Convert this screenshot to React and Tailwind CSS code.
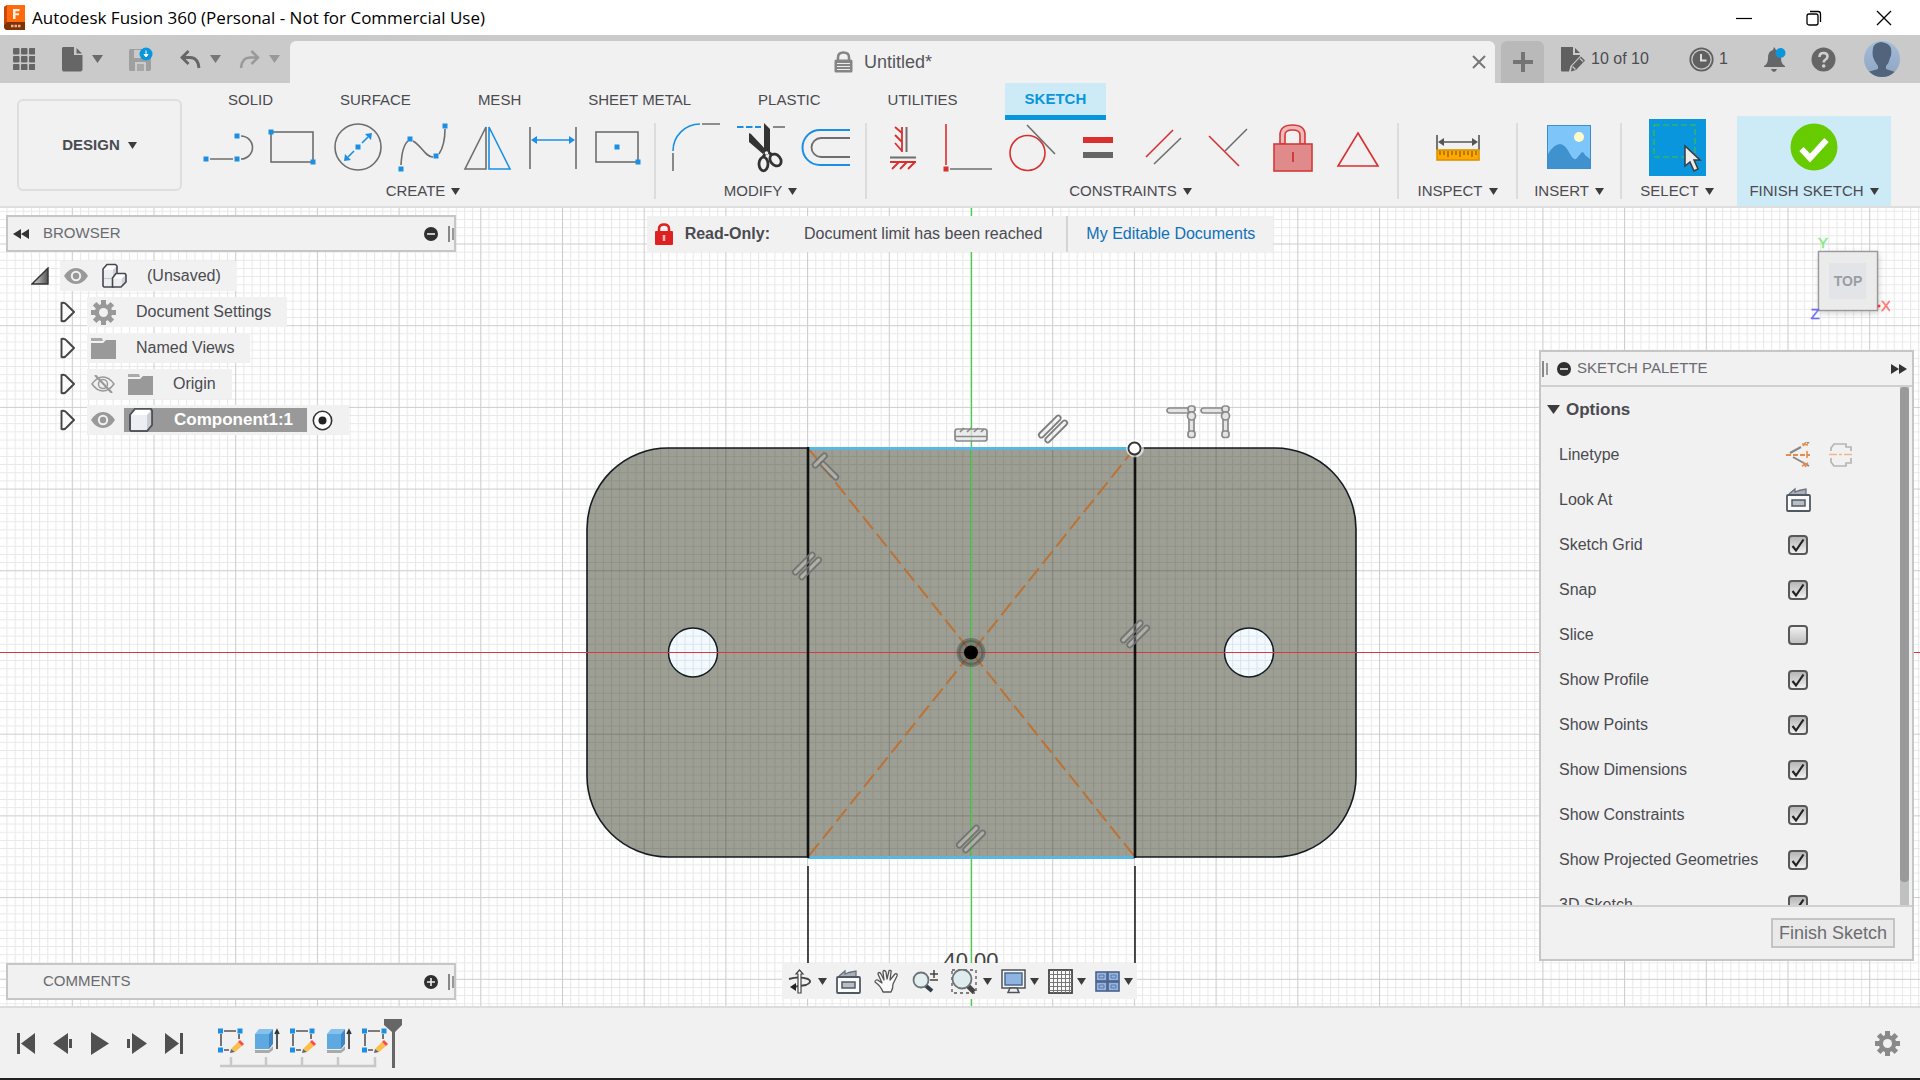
import React from "react";

const BLUE = "#1a8fe6";
const GREY = "#6e6e6e";
const RED = "#d92f2f";

function Caret({ className = "text-[#3c3c3c]", w = 9, h = 7 }) {
  return (
    <svg width={w} height={h} viewBox="0 0 9 7" preserveAspectRatio="none" className={className} aria-hidden="true">
      <path d="M0 0H9L4.500 7Z" fill="currentColor" />
    </svg>
  );
}

function Dot({ x, y, c = BLUE }) {
  return <rect x={x - 2.5} y={y - 2.5} width="5" height="5" fill={c} stroke="none" />;
}

function Tool({ label, children }) {
  return (
    <button type="button" aria-label={label} className="h-[52px] w-12 shrink-0">
      <svg width="48" height="52" viewBox="0 0 48 52" fill="none" strokeWidth="1.6" stroke={GREY} className="block overflow-visible">
        {children}
      </svg>
    </button>
  );
}

function Group({ label, className, children }) {
  return (
    <div className={`flex shrink-0 flex-col items-center pt-[5px] ${className}`}>
      <div className="flex h-[52px] items-center gap-[17px]">{children}</div>
      <button type="button" className="mt-2 flex h-5 items-center gap-[6px] whitespace-nowrap text-[15px] leading-5 text-[#4a4a50]">
        {label}
        <Caret />
      </button>
    </div>
  );
}

function Sep() {
  return <div className="mt-[7px] h-[76px] w-[2px] shrink-0 bg-[#dcdcdc]" />;
}

/* ---------- title bar ---------- */

function TitleBar() {
  return (
    <header className="flex h-[35px] shrink-0 items-center justify-between bg-white pl-1 pr-7">
      <div className="flex items-center gap-[6px]">
        <svg width="22" height="26" viewBox="0 0 22 26" aria-hidden="true">
          <path d="M0 2 3 0H21V25H2L0 22Z" fill="#ff6a0c" />
          <path d="M0 2 3 0V18L0 20Z" fill="#c9480a" />
          <path d="M0 20 3 17H21V25H2L0 23Z" fill="#7e3205" />
          <path d="M9 14V4H15.500V6.200H11.500V8.200H15V10.200H11.500V14Z" fill="#fff1e4" />
          <path d="M7 21H17" stroke="#e5b593" strokeWidth="2.500" strokeDasharray="2.500 1" />
        </svg>
        <h1 className="whitespace-nowrap font-['Open_Sans',sans-serif] text-[17px] leading-6 text-black">
          Autodesk Fusion 360 (Personal - Not for Commercial Use)
        </h1>
      </div>
      <div className="flex items-center gap-[54px]">
        <button type="button" aria-label="Minimize">
          <svg width="16" height="16" viewBox="0 0 16 16"><path d="M0 8.500H16" stroke="#000" strokeWidth="1.200" /></svg>
        </button>
        <button type="button" aria-label="Restore">
          <svg width="16" height="16" viewBox="0 0 16 16" fill="none" stroke="#000" strokeWidth="1.300">
            <rect x="1" y="4" width="11" height="11" rx="2" />
            <path d="M4 1.500H12Q14.500 1.500 14.500 4V12" />
          </svg>
        </button>
        <button type="button" aria-label="Close">
          <svg width="16" height="16" viewBox="0 0 16 16"><path d="M1 1 15 15M15 1 1 15" stroke="#000" strokeWidth="1.300" /></svg>
        </button>
      </div>
    </header>
  );
}

/* ---------- document tabs ---------- */

function DocumentBar() {
  return (
    <div className="flex h-[48px] shrink-0 items-end bg-[#cacaca] text-[#666]">
      <div className="flex h-[48px] w-[290px] shrink-0 items-center pl-[13px]">
        <button type="button" aria-label="Data panel" className="w-[49px]">
          <svg width="22" height="22" viewBox="0 0 22 22" fill="#666">
            {[0, 8, 16].map((y) => [0, 8, 16].map((x) => <rect key={`${x}-${y}`} x={x} y={y} width="6.500" height="6.500" rx="1" />))}
          </svg>
        </button>
        <button type="button" aria-label="File" className="flex w-[67px] items-center gap-[9px]">
          <svg width="21" height="25" viewBox="0 0 21 25" fill="#666"><path d="M1 0H12V8H20.500V23L19 24.500H1L0 23V1Z" /><path d="M14.500 1 20 6.500H14.500Z" /></svg>
          <Caret className="text-[#6a6a6a]" w={11} h={8} />
        </button>
        <button type="button" aria-label="Save" className="w-[51px]">
          <svg width="24" height="25" viewBox="0 0 24 25">
            <path d="M1.500 2H19L22 5V22Q22 24 20 24H1.500Q0 24 0 22V3.500Q0 2 1.500 2Z" fill="#9f9f9f" />
            <path d="M5 3H15V11H5ZM6 15H17V24H15V18H12.500V24H6Z" fill="#cacaca" />
            <path d="M8 17H15V24H8Z" fill="#a8a8a8" />
            <circle cx="17" cy="7" r="6.500" fill="#0a96dc" />
            <path d="M17 3.500V8M15 7.500 17 10 19 7.500Z" stroke="#fff" fill="#fff" strokeWidth="1" />
          </svg>
        </button>
        <button type="button" aria-label="Undo" className="flex w-[59px] items-center gap-[9px]">
          <svg width="21" height="19" viewBox="0 0 21 19" fill="none" stroke="#666" strokeWidth="2.800"><path d="M8.500 1 2 7.500 8.500 14M2 7.500H10Q18 7.500 19 18" /></svg>
          <Caret className="text-[#777]" w={11} h={8} />
        </button>
        <button type="button" aria-label="Redo" className="flex items-center gap-[9px]">
          <svg width="21" height="19" viewBox="0 0 21 19" fill="none" stroke="#999" strokeWidth="2.500"><path d="M12.500 1 19 7.500 12.500 14M19 7.500H11Q3 7.500 2 18" /></svg>
          <Caret className="text-[#999]" w={11} h={8} />
        </button>
      </div>
      <div className="flex h-[42px] min-w-0 flex-1 items-center rounded-t-[6px] bg-[#f1f1f1] pl-[22px] pr-[9px]">
        <div className="flex flex-1 items-center justify-center gap-[11px] pr-[18px]">
          <svg width="19" height="22" viewBox="0 0 19 22">
            <path d="M4 10V6.500Q4 1.500 9.500 1.500T15 6.500V10" fill="none" stroke="#858585" strokeWidth="2.500" />
            <rect x="0.500" y="8.500" width="18" height="13" rx="1.500" fill="#858585" />
            <path d="M3 12.500H16M3 15.500H16M3 18.500H16" stroke="#eee" strokeWidth="1" />
          </svg>
          <span className="text-[18px] leading-6 text-[#55555c]">Untitled*</span>
        </div>
        <button type="button" aria-label="Close tab">
          <svg width="14" height="14" viewBox="0 0 14 14"><path d="M1 1 13 13M13 1 1 13" stroke="#777" strokeWidth="2" /></svg>
        </button>
      </div>
      <button type="button" aria-label="New tab" className="ml-[6px] flex h-[42px] w-[43px] shrink-0 items-center justify-center rounded-t-[6px] bg-[#b9b9b9]">
        <svg width="20" height="20" viewBox="0 0 20 20"><path d="M10 0V20M0 10H20" stroke="#747474" strokeWidth="4" /></svg>
      </button>
      <div className="flex h-[48px] w-[376px] shrink-0 items-center pl-[17px] text-[16px] leading-5 text-[#4c4c52]">
        <button type="button" className="flex w-[128px] items-center gap-[5px]">
          <svg width="25" height="25" viewBox="0 0 25 25" fill="#606060">
            <path d="M0 0H12V8H19V9L9.500 19 8 24.500H1Q0 24.500 0 23.500Z" /><path d="M14 1 19 6H14Z" />
            <path d="M11 19 20 9.500 24 13.500 15 23 10 24.500Z" /><path d="M19 11.500 22 14.500M11.500 19.500 14.500 22.500" stroke="#cacaca" strokeWidth="1.200" />
          </svg>
          10 of 10
        </button>
        <button type="button" className="flex w-[75px] items-center gap-[5px]">
          <svg width="25" height="25" viewBox="0 0 25 25"><circle cx="12.500" cy="12.500" r="11.200" fill="none" stroke="#606060" strokeWidth="1.800" /><circle cx="12.500" cy="12.500" r="9" fill="#606060" /><path d="M12 7V13.500H17.500" fill="none" stroke="#ddd" strokeWidth="2" /></svg>
          1
        </button>
        <button type="button" aria-label="Notifications" className="w-[47px]">
          <svg width="22" height="25" viewBox="0 0 22 25" fill="#666">
            <path d="M10 0Q11 1 12 3Q17 4 17 11Q17 17 21 19V20H0V19Q4 17 4 11Q4 4 9 3Z" /><path d="M7 22H13Q12 25 10 25T7 22Z" />
            <circle cx="16.500" cy="6" r="5" fill="#0a96dc" />
          </svg>
        </button>
        <button type="button" aria-label="Help" className="w-[53px]">
          <svg width="25" height="25" viewBox="0 0 25 25"><circle cx="12.500" cy="12.500" r="12" fill="#666" /><path d="M8.500 10Q8.500 6 12.500 6T16.500 9.500Q16.500 11.500 14 13Q12.700 14 12.700 15.500" fill="none" stroke="#d0d0d0" strokeWidth="2.600" /><circle cx="12.700" cy="19" r="1.800" fill="#d0d0d0" /></svg>
        </button>
        <button type="button" aria-label="Account">
          <svg width="36" height="36" viewBox="0 0 36 36">
            <defs><clipPath id="av"><circle cx="18" cy="18" r="18" /></clipPath><linearGradient id="avg" x2="0" y2="1"><stop stopColor="#a3bdd9" /><stop offset="1" stopColor="#8fa5c2" /></linearGradient></defs>
            <g clipPath="url(#av)"><rect width="36" height="36" fill="url(#avg)" /><path d="M9 7Q10 2 17 1Q25 2 27 7Q28 14 26 17Q25 22 22 25V28L31 31V36H4V31L14 28V25Q10 20 9 16Q8 12 9 7Z" fill="#52637c" /></g>
          </svg>
        </button>
      </div>
    </div>
  );
}

/* ---------- ribbon ---------- */

const TABS = ["SOLID", "SURFACE", "MESH", "SHEET METAL", "PLASTIC", "UTILITIES"];

function Ribbon() {
  return (
    <div className="flex h-[125px] shrink-0 border-b-2 border-[#dedede] bg-[#f1f1f1] shadow-[0_1px_1px_#eee]">
      <div className="w-[204px] shrink-0 pl-[17px] pt-4">
        <button type="button" className="flex h-[92px] w-[165px] items-center justify-center gap-2 rounded-[6px] border-2 border-[#dedede] text-[15px] font-bold text-[#4a4a50]">
          DESIGN <Caret />
        </button>
      </div>
      <div className="min-w-0 flex-1">
        <div className="flex h-[33px] items-start gap-[27px] pl-1">
          {TABS.map((t) => (
            <button key={t} type="button" className="h-[34px] whitespace-nowrap px-5 text-[15px] leading-5 text-[#4a4a50]">{t}</button>
          ))}
          <button type="button" className="h-[37px] border-b-[5px] border-[#0a96dc] bg-[#cdeaf7] px-5 text-[15px] font-bold leading-5 text-[#0a96dc]">SKETCH</button>
        </div>
        <div className="flex h-[90px] items-start">
          <Group label="CREATE" className="w-[450px] pr-3">
            <Tool label="Line"><path d="M6 38H29M37 15A11.500 11.500 0 0 1 37 38" /><Dot x={2} y={38} /><Dot x={33} y={38} /><Dot x={33} y={15} /></Tool>
            <Tool label="Rectangle"><rect x="2" y="11" width="42" height="30" /><Dot x={2} y={11} /><Dot x={44} y={41} /></Tool>
            <Tool label="Circle"><circle cx="24" cy="26" r="23" /><g stroke={BLUE} fill={BLUE}><path d="M28 22 34 16M20 30 14 36" /><path d="M38 12 37 19 31 13ZM10 40 11 33 17 39Z" stroke="none" /></g><Dot x={24} y={26} /></Tool>
            <Tool label="Spline"><path d="M2 44Q3 25 9 20M14 20C24 26 26 36 34 36M40 33Q46 24 46 8" /><Dot x={2} y={48} /><Dot x={11} y={18} /><Dot x={37} y={35} /><Dot x={46} y={5} /></Tool>
            <Tool label="Mirror"><path d="M22 6V48H1Z" /><path d="M25 6V48H46Z" stroke={BLUE} /></Tool>
            <Tool label="Dimension"><path d="M1 6V48M47 6V48" /><path d="M5 19H43" stroke={BLUE} /><path d="M2 19 8 15V23ZM46 19 40 15V23Z" fill={BLUE} stroke="none" /></Tool>
            <Tool label="Center rectangle"><rect x="2" y="11" width="42" height="30" /><Dot x={23} y={26} /><Dot x={44} y={41} /></Tool>
          </Group>
          <Sep />
          <Group label="MODIFY" className="w-[209px]">
            <Tool label="Fillet"><path d="M1 30A27 27 0 0 1 28 3" stroke={BLUE} /><path d="M30 3H48M1 32V50" /></Tool>
            <Tool label="Trim">
              <path d="M0 6H24" stroke={BLUE} strokeWidth="1.800" strokeDasharray="6.500 2.500" /><path d="M36 6H48" />
              <path d="M27 2 30 5 33 8V31L30 34 27 32ZM12 12 14 13 29 29 26 33 12 21Z" fill="#333" stroke="none" />
              <ellipse cx="26.500" cy="43" rx="4.500" ry="6.800" stroke="#333" strokeWidth="2.800" /><ellipse cx="38.500" cy="39" rx="5" ry="6.500" stroke="#333" strokeWidth="2.800" transform="rotate(-40 38.500 39)" />
              <path d="M26 36 30 30 35 34" stroke="#333" strokeWidth="3" /><circle cx="29.500" cy="32" r="1.800" fill="#eee" stroke="none" />
            </Tool>
            <Tool label="Offset"><path d="M48 9H18A17.500 17.500 0 0 0 18 44H48" stroke={BLUE} strokeWidth="2" /><path d="M48 17H19A9.500 9.500 0 0 0 19 36H48" strokeWidth="1.800" /></Tool>
          </Group>
          <Sep />
          <Group label="CONSTRAINTS" className="w-[530px] pr-[3px]">
            <Tool label="Horizontal/Vertical"><g stroke={RED}><path d="M23 6V31M23 12 16 6M23 21 16 14M23 30 16 22M11 41H37M20 41 13 48M28 41 21 48M36 41 29 48" strokeWidth="1.800" /></g><path d="M27.500 6V31M11 36.500H37" strokeWidth="2" /></Tool>
            <Tool label="Coincident"><path d="M2 3V44" stroke={RED} /><path d="M6 48H48" /><Dot x={2} y={48} c={RED} /></Tool>
            <Tool label="Tangent"><circle cx="18.500" cy="32" r="17.500" stroke={RED} /><path d="M18 4 46 33" /></Tool>
            <Tool label="Equal"><path d="M9 16H39V22H9Z" fill={RED} stroke="none" /><path d="M9 31H39V37H9Z" fill="#666" stroke="none" /></Tool>
            <Tool label="Parallel"><path d="M7 36 34 9" stroke={RED} /><path d="M15 43 42 17" /></Tool>
            <Tool label="Perpendicular"><path d="M5 15 35 45" stroke={RED} /><path d="M21 30 43 8" /></Tool>
            <Tool label="Fix"><g stroke="#d43a3a"><path d="M11 23V14Q11 4 23.500 4T36 14V23H31V14Q31 9 23.500 9T16 14V23Z" fill="#efb9b9" /><rect x="5" y="23" width="38" height="27" fill="#e08b8b" /><path d="M24 31V41" strokeWidth="2" /></g></Tool>
            <Tool label="Polygon"><path d="M24 12 44 45H4Z" stroke={RED} /></Tool>
          </Group>
          <Sep />
          <Group label="INSPECT" className="w-[117px]">
            <Tool label="Measure">
              <path d="M3 14V29M45 14V29M6 21H42" stroke="#555" /><path d="M4 21 10 17V25ZM44 21 38 17V25Z" fill="#555" stroke="none" />
              <rect x="3" y="29" width="42" height="10" fill="#ffa800" stroke="#dd9200" /><path d="M6 30V34M10 30V34M14 30V36M18 30V34M22 30V34M26 30V36M30 30V34M34 30V34M38 30V36M42 30V34" stroke="#704b00" strokeWidth="1" />
            </Tool>
          </Group>
          <Sep />
          <Group label="INSERT" className="w-[102px]">
            <Tool label="Insert image">
              <rect x="2.500" y="4.500" width="43" height="43" fill="#7ec6fa" stroke="#3b8fd0" strokeWidth="1" />
              <path d="M3 33Q9 23 15 23Q20 23 25 33 28 39 31 38L37 31Q39 31 40 34L45 38V47H3Z" fill="#3f92ce" stroke="none" /><circle cx="34" cy="16" r="5" fill="#fffcc8" stroke="none" />
            </Tool>
          </Group>
          <Sep />
          <Group label="SELECT" className="w-[115px] pr-[5px]">
            <button type="button" aria-label="Select" aria-pressed="true" className="h-[57px] w-[57px] bg-[#0a96dc]">
              <svg width="57" height="57" viewBox="0 0 57 57"><rect x="5" y="6" width="41" height="32" fill="none" stroke="#33b46a" strokeWidth="1.600" strokeDasharray="6 3" /><path d="M36 27V47L41 43 45 52 49 50 45 41H51Z" fill="#eee" stroke="#3b3b3b" strokeWidth="1.500" /></svg>
            </button>
          </Group>
          <div className="h-[90px] bg-[#cdeaf7]">
            <Group label="FINISH SKETCH" className="w-[154px]">
              <Tool label="Finish sketch"><circle cx="24" cy="26" r="23.500" fill="#66cc00" stroke="none" /><path d="M11.500 28 20 37 36.500 19" stroke="#fff" strokeWidth="6" /></Tool>
            </Group>
          </div>
        </div>
      </div>
    </div>
  );
}

/* ---------- canvas drawing ---------- */

const CX = 971;
const CY = 652.5;
const STEP = 81.7;

function ParallelGlyph({ x, y }) {
  return (
    <g transform={`translate(${x} ${y}) rotate(-45)`} fill="#ddd" fillOpacity="0.3" stroke="#6f6f6f" strokeOpacity=".9" strokeWidth="1.800">
      <rect x="-15" y="-6.500" width="29" height="5" rx="2.500" /><rect x="-14" y="1.500" width="29" height="5" rx="2.500" />
    </g>
  );
}

function PerpGlyph({ x, y }) {
  return (
    <g transform={`translate(${x} ${y})`} fill="#e4e4e4" stroke="#8a8a8a" strokeWidth="1.700">
      <rect x="0" y="3" width="23" height="5" rx="2.500" /><rect x="21" y="1" width="7" height="6" rx="2.500" /><rect x="22" y="11" width="5" height="16" /><circle cx="24.500" cy="11" r="4" /><rect x="21" y="26" width="7" height="6.500" rx="2.500" />
    </g>
  );
}

function Sketch() {
  return (
    <svg className="absolute inset-0 h-full w-full" viewBox="0 208 1920 798" preserveAspectRatio="xMidYMid slice" fill="none" aria-label="Sketch canvas">
      <defs>
        <pattern id="minor" x={CX - 0.5} y={CY - 0.5} width={STEP / 10} height={STEP / 10} patternUnits="userSpaceOnUse"><path d="M.5 0V9M0 .5H9" stroke="#000" strokeOpacity=".09" /></pattern>
        <pattern id="major" x={CX - 0.5} y={CY - 0.5} width={STEP} height={STEP} patternUnits="userSpaceOnUse"><path d="M.5 0V82M0 .5H82" stroke="#000" strokeOpacity=".12" /></pattern>
      </defs>
      <rect y="208" width="1920" height="798" fill="#fff" />
      <path d="M669 448H1275A81 81 0 0 1 1356 529V776A81 81 0 0 1 1275 857H668A81 81 0 0 1 587 776V529A81 81 0 0 1 669 448Z" fill="#9e9f94" stroke="#141d22" strokeWidth="1.600" />
      <circle cx="693" cy="652.500" r="24.500" fill="#f2faff" stroke="#141d22" strokeWidth="1.500" />
      <circle cx="1249" cy="652.500" r="24.500" fill="#f2faff" stroke="#141d22" strokeWidth="1.500" />
      <rect y="208" width="1920" height="798" fill="url(#minor)" />
      <rect y="208" width="1920" height="798" fill="url(#major)" />
      <path d="M0 652.500H1920" stroke="#d23c41" strokeWidth="1.200" />
      <path d="M971.500 208V1006" stroke="#46d246" strokeWidth="1.300" />
      <path d="M808 448 1135 857M1135 448 808 857" stroke="#bd7234" strokeWidth="2" strokeDasharray="16 6" />
      <path d="M808 448.500H1135M808 857.500H1135" stroke="#5bb6e2" strokeWidth="3" />
      <path d="M808 447V858M1135 447V858" stroke="#111" strokeWidth="2.600" />
      <path d="M808 866V975M1135 866V975" stroke="#222" strokeWidth="1.600" />
      <circle cx="971" cy="652.500" r="12.500" stroke="#3a3d36" strokeOpacity=".4" strokeWidth="4" fill="#4a4d45" fillOpacity=".35" />
      <circle cx="971" cy="652.500" r="7" fill="#000" />
      <circle cx="1135" cy="448.500" r="9" fill="#fff" fillOpacity=".6" />
      <circle cx="1134.500" cy="448.500" r="6" fill="#fff" stroke="#333" strokeWidth="1.800" />
      <ParallelGlyph x={807} y={566} /><ParallelGlyph x={1135} y={634} /><ParallelGlyph x={971} y={839} /><ParallelGlyph x={1053} y={429} />
      <g transform="translate(823 465) rotate(45)" fill="#ddd" fillOpacity=".3" stroke="#6f6f6f" strokeOpacity=".9" strokeWidth="1.800"><rect x="-8" y="-10" width="5" height="18" rx="2.500" /><rect x="-3" y="-3" width="23" height="5" rx="2.500" /></g>
      <g stroke="#8a8a8a" strokeWidth="1.700" fill="#e4e4e4" fillOpacity=".7">
        <rect x="955" y="429" width="32" height="12" rx="2.500" />
        <path d="M955 436.500H987M960 432 964 428M967 432 971 428M974 432 978 428M981 432 984 429" />
      </g>
      <PerpGlyph x={1167} y={405} /><PerpGlyph x={1201} y={405} />
      <text x="971" y="968" textAnchor="middle" fontSize="22" fontFamily="Liberation Sans, Arial, sans-serif" fill="#444">40.00</text>
    </svg>
  );
}

/* ---------- browser tree ---------- */

function Eye({ off }) {
  return (
    <svg width="24" height="18" viewBox="0 0 24 18" fill="none">
      {off ? (
        <g stroke="#999" strokeWidth="1.500"><path d="M1 9Q6 2 12 2T23 9Q18 16 12 16T1 9Z" /><circle cx="12" cy="9" r="4.500" /><path d="M4 0 21 18" strokeWidth="2.200" /></g>
      ) : (
        <g><path d="M0 9Q5 1 12 1T24 9Q19 17 12 17T0 9Z" fill="#999" /><circle cx="12" cy="9" r="4.200" fill="#999" stroke="#f1f1f1" strokeWidth="2" /></g>
      )}
    </svg>
  );
}

function Folder() {
  return <svg width="25" height="21" viewBox="0 0 25 21" fill="#999"><path d="M0 5H12L15 2H25V21H0Z" /><path d="M0 0H11L12 3H0Z" fill="#aaa" /></svg>;
}

function Gear({ size = 25, c = "#999" }) {
  return (
    <svg width={size} height={size} viewBox="0 0 25 25" fill={c}>
      {[0, 45, 90, 135].map((a) => <rect key={a} x="10" y="0" width="5" height="25" transform={`rotate(${a} 12.500 12.500)`} />)}
      <circle cx="12.500" cy="12.500" r="8.800" /><circle cx="12.500" cy="12.500" r="4.500" fill="#f1f1f1" />
    </svg>
  );
}

function Cube() {
  return <svg width="26" height="26" viewBox="0 0 26 26" stroke="#4e5258" strokeWidth="1.700" strokeLinejoin="round"><path d="M2 8 7 2H23L24 4V18L19 24H3L2 23Z" fill="#eceef2" /><path d="M2 8 7 2H23L19 8Z" fill="#fff" stroke="none" /><path d="M19 8 24 3V18L19 24Z" fill="#c9ccd3" stroke="none" /><path d="M2 8 7 2H23L24 4V18L19 24H3L2 23Z" fill="none" /></svg>;
}

function Cubes() {
  return (
    <svg width="26" height="26" viewBox="0 0 26 26" strokeLinejoin="round">
      <path d="M2 6 6 1.500H14.500L16 3V11L12 15V24H3L2 23Z" fill="#eceef2" />
      <path d="M2 6 6 1.500H14.500L16 3 12 7H2Z" fill="#fff" /><path d="M12 7 16 3V11L12 15Z" fill="#cdd0d6" /><path d="M2 15.500H11" stroke="#c6c9d0" strokeWidth="1.200" />
      <path d="M2 6 6 1.500H14.500L16 3V11L12 15V24H3L2 23Z" fill="none" stroke="#44484e" strokeWidth="1.600" />
      <path d="M11.500 15 15 10.500H24L25 12V19L20 24H11.500Z" fill="#eceef2" />
      <path d="M11.500 15 15 10.500H24L25 12 21 15.500H12Z" fill="#fff" /><path d="M21 15.500 25 11.500V19L20.500 24Z" fill="#cdd0d6" />
      <path d="M11.500 15 15 10.500H24L25 12V19L20 24H11.500Z" fill="none" stroke="#44484e" strokeWidth="1.600" />
    </svg>
  );
}

function Expander() {
  return (
    <button type="button" aria-label="Expand" className="w-[27px] shrink-0">
      <svg width="16" height="22" viewBox="0 0 16 22"><path d="M1.500 2Q5 1 7 4L14 11 7 18Q5 21 1.500 20Z" fill="#fafafa" stroke="#444" strokeWidth="1.900" strokeLinejoin="round" /></svg>
    </button>
  );
}

function Grip() {
  return <span className="flex items-center gap-[2px]"><span className="h-4 w-[2px] bg-[#888]" /><span className="h-3 w-[2px] bg-[#999]" /></span>;
}

function RoundMark({ plus }) {
  return <svg width="14" height="14" viewBox="0 0 14 14"><circle cx="7" cy="7" r="7" fill="#303030" /><path d={plus ? "M3 7H11M7 3V11" : "M3 7H11"} stroke="#eee" strokeWidth="1.600" /></svg>;
}

function DockHeader({ title, plus }) {
  return (
    <div className="flex h-[37px] w-[450px] items-center border-2 border-[#c6c6c6] bg-[#f1f1f1] pl-[5px] text-[15px] text-[#6a6a70]">
      <span className="w-[30px]">
        {!plus && <svg width="16" height="10" viewBox="0 0 16 10" fill="#333"><path d="M8 0V10L0 5ZM16 0V10L8 5Z" /></svg>}
      </span>
      <h2 className="flex-1">{title}</h2>
      <button type="button" aria-label={plus ? "Expand comments" : "Collapse browser"} className="mr-[10px]"><RoundMark plus={plus} /></button>
      <Grip />
    </div>
  );
}

function Browser() {
  const row = "flex h-[30px] items-center";
  const box = "flex h-[30px] items-center bg-[#f1f1f1] pl-1 pr-4";
  return (
    <section>
      <DockHeader title="BROWSER" />
      <ul className="mt-[9px] flex flex-col gap-[6px] text-[16px] leading-5 text-[#4a4a50]">
        <li className={`${row} pl-[25px]`}>
          <button type="button" aria-label="Collapse" className="w-[29px]">
            <svg width="18" height="18" viewBox="0 0 18 18"><defs><linearGradient id="tri"><stop stopColor="#ddd" /><stop offset="1" stopColor="#555" /></linearGradient></defs><path d="M17 1V17H1Z" fill="url(#tri)" stroke="#333" strokeWidth="1.400" /></svg>
          </button>
          <span className={box}><Eye /><span className="ml-[13px] mr-5"><Cubes /></span>(Unsaved)</span>
        </li>
        <li className={`${row} pl-[54px]`}><Expander /><span className={box}><Gear /><span className="ml-5">Document Settings</span></span></li>
        <li className={`${row} pl-[54px]`}><Expander /><span className={box}><Folder /><span className="ml-5">Named Views</span></span></li>
        <li className={`${row} pl-[54px]`}><Expander /><span className={box}><Eye off /><span className="ml-[13px] mr-5"><Folder /></span>Origin</span></li>
        <li className={`${row} pl-[54px]`}>
          <Expander />
          <span className={box}>
            <Eye />
            <span className="ml-[9px] mr-[5px] flex h-6 items-center bg-[#999] pl-1 pr-[14px] text-[17px] font-bold text-white"><Cube /><span className="ml-5">Component1:1</span></span>
            <svg width="21" height="21" viewBox="0 0 21 21"><circle cx="10.500" cy="10.500" r="9.200" fill="#fff" stroke="#333" strokeWidth="1.600" /><circle cx="10.500" cy="10.500" r="4" fill="#222" /></svg>
          </span>
        </li>
      </ul>
    </section>
  );
}

/* ---------- centre overlays ---------- */

function Banner() {
  return (
    <div className="mt-2 flex h-9 w-max items-center bg-[#f1f1f1] pl-2 text-[16px] leading-5 text-[#4a4a50]">
      <svg width="18" height="22" viewBox="0 0 18 22"><path d="M4 9V6Q4 1.500 9 1.500T14 6V9" fill="none" stroke="#de2020" strokeWidth="2.500" /><rect y="8" width="18" height="14" rx="1" fill="#de2020" /><path d="M9 12V18" stroke="#f5b5b5" strokeWidth="2.500" /></svg>
      <strong className="ml-3">Read-Only:</strong>
      <span className="ml-[34px]">Document limit has been reached</span>
      <span className="ml-6 h-9 w-[2px] bg-[#d4d4d4]" />
      <a href="#documents" className="px-[18px] text-[#1070b8]">My Editable Documents</a>
    </div>
  );
}

function LookAt() {
  return <svg width="25" height="25" viewBox="0 0 25 25" fill="none" stroke="#505963" strokeWidth="1.800"><path d="M3 7 9 2V5L13 3.500 20 2V7" fill="#aab0b8" stroke="#6a727c" strokeWidth="1.300" /><rect x="1" y="8" width="23" height="16" rx="1" fill="#fbfbfb" /><rect x="6" y="13" width="13" height="6" fill="#b8bec6" strokeWidth="1.500" /></svg>;
}

function NavTool({ label, gap, children }) {
  return <button type="button" aria-label={label} className={`flex items-center ${gap || "mr-1"}`}>{children}{gap && <Caret />}</button>;
}

function NavBar() {
  return (
    <nav aria-label="Navigation" className="mb-[7px] flex h-9 w-max items-center gap-[9px] bg-[#f1f1f1] pl-[5px] pr-1">
      <NavTool label="Orbit" gap="gap-[6px]">
        <svg width="25" height="25" viewBox="0 0 25 25" fill="none" stroke="#444" strokeWidth="1.900"><path d="M2 10Q12 7 21 10Q26 13 19 16L6 18" /><path d="M9 14 3 18 9 22Z" fill="#222" stroke="none" /><path d="M11 24V5H9L12.500 1 16 5H14V24Z" fill="#fff" strokeWidth="1.200" /></svg>
      </NavTool>
      <NavTool label="Look at"><LookAt /></NavTool>
      <NavTool label="Pan">
        <svg width="25" height="25" viewBox="0 0 25 25" fill="#fafafa" stroke="#555" strokeWidth="1.300" strokeLinejoin="round"><path d="M9 23C7 18 4 15 1 13 1 11 3 10 5 12L8 14 4 5C4 3 6 3 7 5L10 11 9 3C9 1 11 1 12 3L13 10 15 2C15 1 18 1 17 3L16 11 21 5C22 4 24 5 23 7L19 15Q19 20 17 23Z" /></svg>
      </NavTool>
      <NavTool label="Zoom">
        <svg width="26" height="25" viewBox="0 0 26 25" fill="none"><path d="M13 16 20 22" stroke="#333f48" strokeWidth="4" /><circle cx="9" cy="11" r="7.500" fill="#e2eef0" stroke="#6d7377" strokeWidth="1.800" /><path d="M18 5H26M22 1V9M18 11H26" stroke="#444" strokeWidth="1.500" /></svg>
      </NavTool>
      <NavTool label="Zoom window" gap="gap-[6px]">
        <svg width="26" height="25" viewBox="0 0 26 25" fill="none"><rect x="1" y="1" width="24" height="23" stroke="#555" strokeDasharray="3 3" strokeWidth="1.300" /><path d="M17 17 23 23" stroke="#444" strokeWidth="5" /><circle cx="11" cy="10" r="9.500" fill="#dfecee" stroke="#6d7377" strokeWidth="1.800" /></svg>
      </NavTool>
      <NavTool label="Display settings" gap="gap-1">
        <svg width="25" height="25" viewBox="0 0 25 25" stroke="#4c535a" strokeWidth="1.500"><rect x="1" y="1" width="23" height="18" fill="#f7f7f7" /><rect x="4" y="4" width="17" height="12" fill="#8fb4e2" stroke="#4a6890" /><path d="M9 19 7 23.500H18L16 19Z" fill="#eee" /></svg>
      </NavTool>
      <NavTool label="Grid and snaps" gap="gap-1">
        <svg width="25" height="25" viewBox="0 0 25 25" stroke="#777" strokeWidth="1" fill="#fafafa"><rect x="1" y="1" width="23" height="23" stroke="#444" strokeWidth="1.800" /><path d="M1 5.500H24M1 9.500H24M1 13.500H24M1 17.500H24M1 21.500H24M5.500 1V24M9.500 1V24M13.500 1V24M17.500 1V24M21.500 1V24" /></svg>
      </NavTool>
      <NavTool label="Viewports" gap="gap-1">
        <svg width="25" height="21" viewBox="0 0 25 21" stroke="#4c6088" strokeWidth="1.600" fill="#92b5e3"><rect x="1" y="1" width="11" height="9" /><rect x="13" y="1" width="11" height="9" /><rect x="1" y="11" width="11" height="9" /><rect x="13" y="11" width="11" height="9" /><path d="M4 4H9V7H4ZM16 4H21V7H16ZM4 14H9V17H4ZM16 14H21V17H16Z" strokeWidth=".7" fill="none" /></svg>
      </NavTool>
    </nav>
  );
}

/* ---------- right side ---------- */

function ViewCube() {
  return (
    <svg width="84" height="92" viewBox="1806 232 84 92" className="mr-[30px] mt-6" fontFamily="Liberation Sans, Arial, sans-serif" aria-label="View cube">
      <defs><filter id="soft"><feGaussianBlur stdDeviation="3" /></filter></defs>
      <rect x="1819" y="253" width="60" height="60" fill="#000" opacity=".18" filter="url(#soft)" />
      <rect x="1818.500" y="251.500" width="59" height="59" fill="#ebebeb" stroke="#999" strokeWidth="1.400" />
      <rect x="1829" y="263" width="37" height="36" fill="#e3e4e8" />
      <text x="1848" y="286" textAnchor="middle" fontSize="14" fontWeight="bold" fill="#9a9da3">TOP</text>
      <text x="1823" y="248" textAnchor="middle" fontSize="15" fill="#7bec7b" stroke="#7bec7b" strokeWidth=".4">Y</text>
      <text x="1886" y="311" textAnchor="middle" fontSize="15" fill="#ff7070" stroke="#ff7070" strokeWidth=".4">X</text>
      <text x="1815" y="319" textAnchor="middle" fontSize="15" fill="#6b6bff" stroke="#6b6bff" strokeWidth=".4">Z</text>
      <circle cx="1879" cy="306" r="1.500" fill="#f33" />
    </svg>
  );
}

function Check({ label, checked = true }) {
  return (
    <label className="flex h-[45px] items-center">
      <span className="w-[229px] whitespace-nowrap">{label}</span>
      <span className="grid h-5 w-5">
        <input type="checkbox" defaultChecked={checked} className="peer col-start-1 row-start-1 h-5 w-5 appearance-none rounded-[4px] border-2 border-[#585858] bg-gradient-to-b from-[#f0f0f0] to-[#c0c0c0] checked:from-[#b5b5b5] checked:to-[#f0f0f0]" />
        <svg viewBox="0 0 20 20" className="pointer-events-none invisible col-start-1 row-start-1 h-5 w-5 peer-checked:visible"><path d="M4.500 11 8 15.500 15.500 4.500" fill="none" stroke="#222" strokeWidth="2.200" /></svg>
      </span>
    </label>
  );
}

function Palette() {
  return (
    <section className="mr-[6px] mt-[26px] flex w-[375px] flex-col border-2 border-[#c6c6c6] bg-[#f1f1f1] text-[#4a4a50]">
      <div className="flex h-[35px] items-center border-b-2 border-[#d0d0d0] pl-[1px] pr-[5px] text-[15px] text-[#6a6a70]">
        <Grip />
        <button type="button" aria-label="Collapse palette" className="ml-[9px] mr-[6px]"><RoundMark /></button>
        <h2 className="flex-1">SKETCH PALETTE</h2>
        <button type="button" aria-label="Dock palette"><svg width="16" height="10" viewBox="0 0 16 10" fill="#333"><path d="M0 0V10L8 5ZM8 0V10L16 5Z" /></svg></button>
      </div>
      <div className="flex h-[518px] text-[16px] leading-5">
        <div className="min-w-0 flex-1 overflow-hidden pl-[18px]">
          <button type="button" className="-ml-3 flex h-[45px] items-center gap-[6px] text-[17px] font-bold"><Caret w={13} h={9} />Options</button>
          <div className="flex h-[45px] items-center">
            <span className="w-[227px]">Linetype</span>
            <button type="button" aria-label="Construction" className="mr-[18px]">
              <svg width="25" height="26" viewBox="0 0 25 26" fill="none" strokeWidth="2"><path d="M4 11 15 5M21 1 23 0M7 15 23 24" stroke="#888" /><path d="M0 13H24" stroke="#ea8a48" strokeDasharray="5 2" /><path d="M16 2 22 3M17 4 20 0M21 9V16M16 24 22 21M17 20 20 25" stroke="#ea8a48" strokeWidth="1.600" /></svg>
            </button>
            <button type="button" aria-label="Centerline">
              <svg width="25" height="26" viewBox="0 0 25 26" fill="none" strokeWidth="1.700"><path d="M2 9V6L5 2H17V5H22V9M2 16V20L5 24H17V21H22V16" stroke="#b5b5b5" /><path d="M0 12.500H24" stroke="#f3b78c" strokeDasharray="8 2 3 2" /></svg>
            </button>
          </div>
          <div className="flex h-[45px] items-center"><span className="w-[227px]">Look At</span><button type="button" aria-label="Look at"><LookAt /></button></div>
          <Check label="Sketch Grid" />
          <Check label="Snap" />
          <Check label="Slice" checked={false} />
          <Check label="Show Profile" />
          <Check label="Show Points" />
          <Check label="Show Dimensions" />
          <Check label="Show Constraints" />
          <Check label="Show Projected Geometries" />
          <Check label="3D Sketch" />
        </div>
        <div className="mr-[3px] w-[9px] bg-[#bfc0c2]"><div className="h-[495px] rounded-[4px] bg-[#9a9a9c]" /></div>
      </div>
      <div className="flex h-[54px] items-center justify-end border-t-2 border-[#d0d0d0] pr-[17px]">
        <button type="button" className="h-[30px] border-2 border-[#c4c4c4] bg-[#e9e9e9] px-[6px] text-[18px] leading-6 text-[#6c6c70]">Finish Sketch</button>
      </div>
    </section>
  );
}

/* ---------- timeline ---------- */

function SketchFeature() {
  return (
    <svg width="26" height="26" viewBox="0 0 26 26" fill="none">
      <path d="M6 3H18M21 6V11M3 6V18M6 22H11" stroke="#555" strokeWidth="1.600" />
      <Dot x={2.5} y={3} /><Dot x={22} y={3} /><Dot x={2.5} y={22} />
      <path d="M13 21 20 14 24 18 17 24Z" fill="#fcc04a" /><path d="M13 21 17 24 12 25Z" fill="#666" /><path d="M20 14 22 12 26 16 24 18Z" fill="#ff4848" />
    </svg>
  );
}

function ExtrudeFeature() {
  return (
    <svg width="26" height="26" viewBox="0 0 26 26">
      <path d="M1 22H15L19 18V22L15 25H1Z" fill="#aaa" /><path d="M1 6V21H15V6Z" fill="#5ea9e0" /><path d="M1 6 5 1H19L15 6Z" fill="#84c1ee" /><path d="M15 6 19 1V16L15 21Z" fill="#3c87c4" />
      <path d="M23 21V3M21 6 23 2 25 6" fill="none" stroke="#333" strokeWidth="1.600" />
    </svg>
  );
}

function Timeline() {
  const play = [
    ["Go to start", 19, "M1 1H4V22H1ZM19 1V22L5 11.500Z"],
    ["Step back", 19, "M15 1V22L0 11.500ZM16 7H19V16H16Z"],
    ["Play", 19, "M1 0 19 11.500 1 23Z"],
    ["Step forward", 20, "M0 7H3V16H0ZM5 1V22L20 11.500Z"],
    ["Go to end", 19, "M0 1V22L14 11.500ZM15 1H18V22H15Z"],
  ];
  return (
    <footer className="flex h-[74px] shrink-0 items-center border-b-2 border-t-2 border-b-[#222] border-t-[#dcdcdc] bg-[#f1f1f1] pl-4 pr-5">
      <div className="flex items-center gap-[18px]">
        {play.map(([l, w, d]) => (
          <button key={l} type="button" aria-label={l}><svg width={w} height="23" viewBox={`0 0 ${w} 23`} fill="#505050"><path d={d} /></svg></button>
        ))}
      </div>
      <div className="ml-[34px] flex">
        <div>
          <div className="mt-[9px] flex h-[26px] items-center gap-[10px]">
            <SketchFeature /><ExtrudeFeature /><SketchFeature /><ExtrudeFeature /><SketchFeature />
          </div>
          <svg width="170" height="14" viewBox="0 0 170 14" fill="none" stroke="#c8c8c8" strokeWidth="2.500"><path d="M2 12H157V3M13 12V3M48 12V3M84 12V3M120 12V3" /></svg>
        </div>
        <svg width="18" height="49" viewBox="0 0 18 49" fill="#666" className="-ml-1"><path d="M0 0H18V6L11 13V49H8V13L0 6Z" /></svg>
      </div>
      <button type="button" aria-label="Timeline settings" className="ml-auto"><Gear c="#8a8a8a" /></button>
    </footer>
  );
}

export default function App() {
  return (
    <div className="flex h-screen flex-col overflow-hidden bg-[#f1f1f1] font-['Liberation_Sans',Arial,sans-serif]">
      <TitleBar />
      <DocumentBar />
      <Ribbon />
      <main className="relative min-h-0 flex-1 overflow-hidden">
        <Sketch />
        <div className="relative grid h-full grid-cols-[1fr_auto_1fr]">
          <div className="flex flex-col justify-between pb-[6px] pl-[6px] pt-[7px]">
            <Browser />
            <DockHeader title="COMMENTS" plus />
          </div>
          <div className="flex flex-col items-center justify-between">
            <Banner />
            <NavBar />
          </div>
          <div className="flex flex-col items-end">
            <ViewCube />
            <Palette />
          </div>
        </div>
      </main>
      <Timeline />
    </div>
  );
}
